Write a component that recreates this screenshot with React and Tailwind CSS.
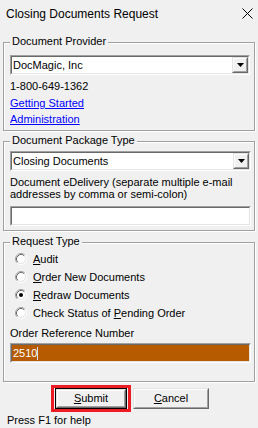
import React from "react";

const sunkenOuter = "border border-t-[#a0a0a0] border-l-[#a0a0a0] border-b-white border-r-white";
const sunkenInner = "border border-t-[#696969] border-l-[#696969] border-b-[#e3e3e3] border-r-[#e3e3e3]";
const raisedOuter = "border border-t-[#e3e3e3] border-l-[#e3e3e3] border-b-[#696969] border-r-[#696969]";
const raisedInner = "border border-t-white border-l-white border-b-[#a0a0a0] border-r-[#a0a0a0] bg-[#f0f0f0]";

function Combo({ value }) {
    return (
        <div className={`h-[20px] ${sunkenOuter}`}>
            <div className={`h-full bg-white flex ${sunkenInner}`}>
                <span className="flex-1 pl-[1px] leading-[16px]">{value}</span>
                <span className={`w-[16px] h-full ${raisedOuter}`}>
                    <span className={`w-full h-full flex items-center justify-center ${raisedInner}`}>
                        <svg width="7" height="4" viewBox="0 0 7 4">
                            <path d="M0 0h7L3.5 4z" fill="#000" />
                        </svg>
                    </span>
                </span>
            </div>
        </div>
    );
}

function TextBox({ children, className = "" }) {
    return (
        <div className={`h-[20px] ${sunkenOuter}`}>
            <div className={`h-full flex items-center ${sunkenInner} ${className}`}>{children}</div>
        </div>
    );
}

function Group({ label, className = "", children }) {
    return (
        <div
            className={`relative mx-[3px] border border-[#a0a0a0] shadow-[inset_1px_1px_0_#fff,1px_1px_0_#fff] ${className}`}
        >
            <span className="absolute -top-[8px] left-[6px] px-[2px] bg-[#f0f0f0] leading-[13px]">
                {label}
            </span>
            {children}
        </div>
    );
}

function Radio({ checked, children }) {
    return (
        <div className="flex items-center h-[18px] pl-[11px] gap-[6px]">
            <svg width="12" height="12" viewBox="0 0 12 12">
                <circle cx="6" cy="6" r="5" fill="#fff" />
                <path d="M2.11 9.89A5.5 5.5 0 0 1 9.89 2.11" fill="none" stroke="#a0a0a0" />
                <path d="M9.89 2.11A5.5 5.5 0 0 1 2.11 9.89" fill="none" stroke="#fff" />
                <path d="M2.82 9.18A4.5 4.5 0 0 1 9.18 2.82" fill="none" stroke="#696969" />
                <path d="M9.18 2.82A4.5 4.5 0 0 1 2.82 9.18" fill="none" stroke="#e3e3e3" />
                {checked && <circle cx="6" cy="6" r="2" fill="#000" />}
            </svg>
            <span className="leading-[14px]">{children}</span>
        </div>
    );
}

export default function App() {
    return (
        <div className="w-[258px] h-[428px] bg-[#f0f0f0] font-['Liberation_Sans',Arial,sans-serif] text-[11px] text-black flex flex-col overflow-hidden">
            {/* Title bar */}
            <div className="h-[27px] flex items-center justify-between pl-[6px] pr-[5px] shrink-0">
                <span className="text-[12px]">Closing Documents Request</span>
                <svg width="11" height="11" viewBox="0 0 11 11">
                    <path d="M0.5 0.5l10 10M10.5 0.5l-10 10" stroke="#000" strokeWidth="1" />
                </svg>
            </div>

            {/* Document Provider */}
            <Group label="Document Provider" className="mt-[15px] pt-[12px] pl-[6px] pr-[4px] pb-[3px]">
                <Combo value="DocMagic, Inc" />
                <div className="mt-[3px] leading-[16px]">1-800-649-1362</div>
                <div className="mt-[1px] leading-[16px]">
                    <a className="text-[#0000ff] underline underline-offset-[1px]">Getting Started</a>
                </div>
                <div className="leading-[16px]">
                    <a className="text-[#0000ff] underline underline-offset-[1px]">Administration</a>
                </div>
            </Group>

            {/* Document Package Type */}
            <Group label="Document Package Type" className="mt-[10px] pt-[9px] pl-[6px] pr-[3px] pb-[4px]">
                <Combo value="Closing Documents" />
                <div className="mt-[5px] leading-[12px]">
                    Document eDelivery (separate multiple e-mail
                    <br />
                    addresses by comma or semi-colon)
                </div>
                <div className="mt-[6px]">
                    <TextBox className="bg-white" />
                </div>
            </Group>

            {/* Request Type */}
            <Group label="Request Type" className="mt-[11px] pt-[7px] pl-0 pr-[3px] pb-[18px]">
                <Radio>
                    <span className="underline">A</span>udit
                </Radio>
                <Radio>
                    <span className="underline">O</span>rder New Documents
                </Radio>
                <Radio checked>
                    <span className="underline">R</span>edraw Documents
                </Radio>
                <Radio>
                    Check Status of <span className="underline">P</span>ending Order
                </Radio>
                <div className="pl-[6px]">
                    <div className="mt-[4px] leading-[14px]">Order Reference Number</div>
                    <div className="mt-[3px]">
                        <TextBox className="bg-[#b65b00] text-white pl-[1px]">
                            <span className="leading-[14px]">2510</span>
                            <span className="w-px h-[13px] bg-[#cfe0ff]" />
                        </TextBox>
                    </div>
                </div>
            </Group>

            {/* Buttons */}
            <div className="mt-[3px] ml-[51px] flex items-center">
                <div className="border-[3px] border-[#ed1c24] px-px">
                    <button className="w-[72px] h-[21px] border border-black block">
                        <span className={`block w-full h-full ${raisedOuter}`}>
                            <span className={`flex w-full h-full items-center justify-center ${raisedInner}`}>
                                <span>
                                    <span className="underline">S</span>ubmit
                                </span>
                            </span>
                        </span>
                    </button>
                </div>
                <button className={`ml-[2px] w-[76px] h-[21px] ${raisedOuter}`}>
                    <span className={`flex w-full h-full items-center justify-center ${raisedInner}`}>
                        <span>
                            <span className="underline">C</span>ancel
                        </span>
                    </span>
                </button>
            </div>

            <div className="mt-px pl-[7px] leading-[14px]">Press F1 for help</div>
        </div>
    );
}
